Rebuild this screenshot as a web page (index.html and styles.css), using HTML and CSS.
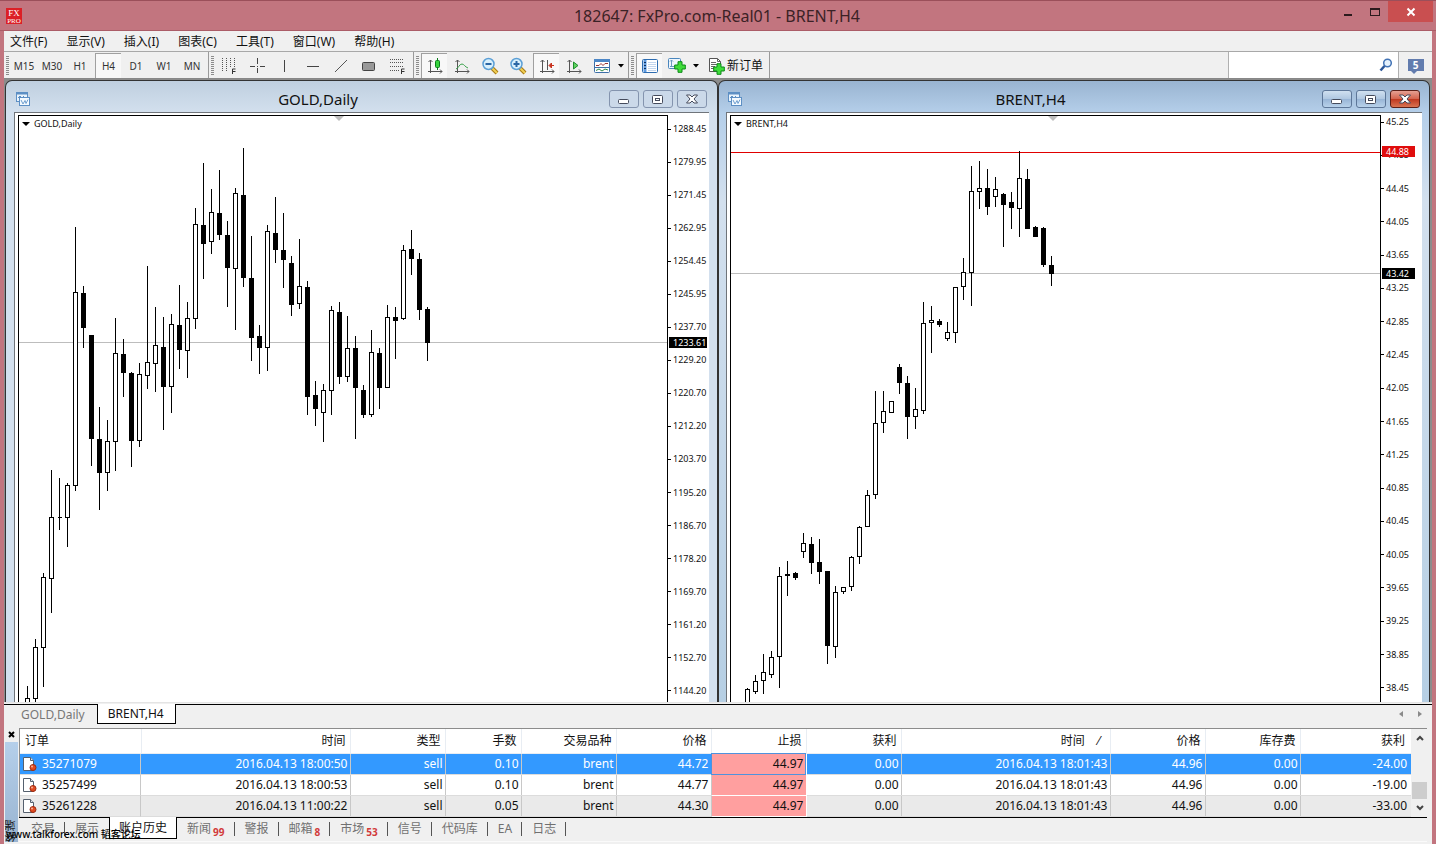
FILE: index.html
```html
<!DOCTYPE html>
<html lang="zh-CN">
<head>
<meta charset="utf-8">
<title>182647: FxPro.com-Real01 - BRENT,H4</title>
<link rel="stylesheet" href="styles.css">
</head>
<body>
<svg class="defs" width="0" height="0" aria-hidden="true">
  <defs>
    <symbol id="chart-window" viewBox="0 0 16 16">
      <rect x="1.500" y="1.500" width="11" height="9" fill="#eaf4fc" stroke="#5d8fc4"/>
      <path d="M1 2.500h12" stroke="#5d8fc4" stroke-width="2"/>
      <path d="M3 7l2-2 2 2 2-2" fill="none" stroke="#5d8fc4"/>
      <rect x="4.500" y="6.500" width="10" height="8" fill="#f4faff" stroke="#5d8fc4"/>
      <path d="M6 9l2 4 2-3.500 1 3 2-4" fill="none" stroke="#6f9fd0"/>
    </symbol>
    <symbol id="win-min" viewBox="0 0 16 12"><rect x="2.500" y="6.500" width="10" height="4" rx="1" fill="#fff" stroke="#454b5c"/></symbol>
    <symbol id="win-max" viewBox="0 0 16 12"><rect x="2.500" y="2.500" width="10" height="8" rx="1" fill="#fff" stroke="#454b5c"/><rect x="5.500" y="5.500" width="4" height="2" fill="#fff" stroke="#454b5c"/></symbol>
    <symbol id="win-close" viewBox="0 0 16 12"><path d="M2.500 2h3.500L8 4l2-2h3.500l-3.500 4 3.500 4H10L8 8l-2 2H2.500L6 6z" fill="#fff" stroke="#454b5c"/></symbol>
    <symbol id="green-plus" viewBox="0 0 12 12"><path d="M4 .7h4V4h3.300v4H8v3.300H4V8H.7V4H4z" fill="#3fdc3a" stroke="#0b8a17"/></symbol>
    <symbol id="order" viewBox="0 0 16 16">
      <path d="M1.500 1.500h7l3 3v10h-10z" fill="#fff" stroke="#55606e"/><path d="M8.500 1.500v3h3" fill="#dfe5ec" stroke="#55606e"/>
      <circle cx="11" cy="11.500" r="3" fill="#e04a20" stroke="#9c2b10"/><circle cx="10" cy="10.500" r="1" fill="#f7b49b"/>
    </symbol>
  </defs>
</svg>

<div class="app">
  <header class="titlebar">
    <svg class="brand" width="16" height="16" viewBox="0 0 16 16" aria-label="FxPro"><rect width="16" height="16" fill="#dc1f26"/><text x="8" y="8" class="brand-a">FX</text><text x="8" y="15" class="brand-b">PRO</text></svg>
    <h1 class="app-title">182647: FxPro.com-Real01 - BRENT,H4</h1>
    <div class="caption-buttons">
      <button class="caption" aria-label="最小化"><svg width="12" height="12"><path d="M2 9h8" stroke="#2c1a1d" stroke-width="2"/></svg></button>
      <button class="caption" aria-label="最大化"><svg width="12" height="12"><path d="M1 3.500h10M1.500 3v7M10.500 3v7M1 9.500h10" fill="none" stroke="#2c1a1d"/><path d="M1 3h10" stroke="#2c1a1d" stroke-width="2"/></svg></button>
      <button class="caption caption-close" aria-label="关闭"><svg width="10" height="10"><path d="M1.500 1.500l7 7M8.500 1.500l-7 7" stroke="#fff" stroke-width="2"/></svg></button>
    </div>
  </header>

  <nav class="menu">
    <button>文件(F)</button><button>显示(V)</button><button>插入(I)</button><button>图表(C)</button><button>工具(T)</button><button>窗口(W)</button><button>帮助(H)</button>
  </nav>

  <div class="toolbar">
    <div class="group">
      <button class="tool">M15</button><button class="tool">M30</button><button class="tool">H1</button><button class="tool pressed">H4</button><button class="tool">D1</button><button class="tool">W1</button><button class="tool">MN</button>
    </div>
    <div class="group">
      <button class="tool" aria-label="斐波那契时区"><svg width="16" height="18"><path d="M1.500 1v13M5.500 1v13M9.500 1v10M13.500 1v9" stroke="#555" stroke-dasharray="1 1"/><path d="M11.500 17v-5h3M11.500 14.500h3" fill="none" stroke="#333"/></svg></button>
      <button class="tool" aria-label="十字线"><svg width="16" height="16"><path d="M8.500 0v6M8.500 10v5M1 8.500h5M11 8.500h5M8 8.500h1" stroke="#444"/></svg></button>
      <button class="tool" aria-label="垂直线"><svg width="16" height="16"><path d="M7.500 2v12" stroke="#444"/></svg></button>
      <button class="tool" aria-label="水平线"><svg width="16" height="16"><path d="M2 8.500h12" stroke="#444"/></svg></button>
      <button class="tool" aria-label="趋势线"><svg width="16" height="16"><path d="M2 14L14 2" stroke="#555"/></svg></button>
      <button class="tool" aria-label="矩形"><svg width="16" height="16"><rect x="1.500" y="4.500" width="12" height="8" rx="1" fill="#999" stroke="#444"/></svg></button>
      <button class="tool" aria-label="斐波那契回调"><svg width="16" height="18"><path d="M1 2.500h14M1 5.500h14M1 9.500h14M1 13.500h10" stroke="#555" stroke-dasharray="1 1"/><path d="M12.500 17v-5h3M12.500 14.500h3" fill="none" stroke="#333"/></svg></button>
    </div>
    <div class="group">
      <button class="tool pressed" aria-label="蜡烛图"><svg width="16" height="16"><path d="M3.500 2v13M1 13.500h14M1.500 4l2-2 2 2M13 11.500l2 2-2 2" fill="none" stroke="#555"/><path d="M10.500 0v12" stroke="#0b7d1a"/><rect x="8.500" y="2.500" width="4" height="7" rx="1" fill="#35d43c" stroke="#0b7d1a"/></svg></button>
      <button class="tool" aria-label="折线图"><svg width="16" height="16"><path d="M3.500 2v13M1 13.500h14M1.500 4l2-2 2 2M13 11.500l2 2-2 2" fill="none" stroke="#555"/><path d="M2 11c3-1 3-5 6-5 2 0 3 3 6 4" fill="none" stroke="#3aa24c"/></svg></button>
      <button class="tool" aria-label="缩小"><svg width="18" height="18"><path d="M11 11l5 5" stroke="#a87a14" stroke-width="4"/><path d="M11 11l5 5" stroke="#f0cf55" stroke-width="2"/><circle cx="7.500" cy="7" r="5.500" fill="#d9f0fc" stroke="#5b9fd6" stroke-width="1.500"/><path d="M4.500 7h6" stroke="#2a66a5" stroke-width="2"/></svg></button>
      <button class="tool" aria-label="放大"><svg width="18" height="18"><path d="M11 11l5 5" stroke="#a87a14" stroke-width="4"/><path d="M11 11l5 5" stroke="#f0cf55" stroke-width="2"/><circle cx="7.500" cy="7" r="5.500" fill="#d9f0fc" stroke="#5b9fd6" stroke-width="1.500"/><path d="M4.500 7h6M7.500 4v6" stroke="#2a66a5" stroke-width="2"/></svg></button>
      <button class="tool pressed" aria-label="图表平移"><svg width="16" height="16"><path d="M3.500 2v13M1 13.500h14M1.500 4l2-2 2 2M13 11.500l2 2-2 2M8.500 2v10" fill="none" stroke="#555"/><path d="M15 7.500h-4M12.500 5l-2.500 2.500 2.500 2.500z" fill="#c8321e" stroke="#c8321e"/></svg></button>
      <button class="tool" aria-label="自动滚动"><svg width="16" height="16"><path d="M3.500 2v13M1 13.500h14M1.500 4l2-2 2 2M13 11.500l2 2-2 2" fill="none" stroke="#555"/><path d="M7.500 4l4.500 3.500-4.500 3.500z" fill="#5fd15f" stroke="#1c8f2c"/></svg></button>
      <button class="tool" aria-label="模板"><svg width="18" height="16"><rect x="1.500" y="1.500" width="15" height="13" rx="1" fill="#fff" stroke="#3d6fa8"/><path d="M1 2.500h16" stroke="#4c86c6" stroke-width="3"/><path d="M1 9.500h16" stroke="#3d6fa8"/><path d="M3 7.500h3l2-2 2 2 2-2h3" fill="none" stroke="#993636"/><path d="M3 12.500l3-1.500 3 2 3-2 3 1" fill="none" stroke="#2d8a4a"/></svg></button>
      <button class="drop" aria-label="模板列表"><svg width="6" height="4"><path d="M0 0h6L3 3.500z"/></svg></button>
    </div>
    <div class="group">
      <button class="tool pressed" aria-label="终端"><svg width="16" height="16"><rect x=".5" y="1.500" width="15" height="13" rx="1" fill="#fff" stroke="#2d6cb0"/><path d="M3 2v12" stroke="#5f9be0" stroke-width="3"/><path d="M6 4.500h8M6 6.500h8M6 8.500h8M6 10.500h8M6 12.500h8" stroke="#c3d6ee"/><path d="M2 4.500h2M2 7.500h2M2 10.500h2" stroke="#0c2f5f"/></svg></button>
      <button class="tool" aria-label="新图表"><svg width="18" height="17"><rect x=".5" y="1.500" width="12" height="10" rx="1" fill="#eef6fd" stroke="#4a86bd"/><path d="M3.500 3v7M2 4.500l1.500-1.500 1.500 1.500M2 9.500h8" fill="none" stroke="#6a98bf"/><use href="#green-plus" x="6" y="4" width="12" height="12"/></svg></button>
      <button class="drop" aria-label="新图表列表"><svg width="6" height="4"><path d="M0 0h6L3 3.500z"/></svg></button>
      <button class="new-order"><svg width="18" height="18"><path d="M1.500 1.500h8l3 3v10h-11z" fill="#fff" stroke="#555"/><path d="M9.500 1.500v3h3M3 5.500h5M3 7.500h7M3 9.500h4M3 11.500h3" fill="none" stroke="#666"/><use href="#green-plus" x="5" y="6" width="12" height="12"/></svg>新订单</button>
    </div>
    <label class="search"><input type="search" aria-label="搜索"><svg width="14" height="14"><circle cx="8.500" cy="5" r="3.800" fill="#e6f2fd" stroke="#4273b5" stroke-width="1.500"/><path d="M5.500 8L1.500 12.500" stroke="#2b5699" stroke-width="2.500"/></svg></label>
    <button class="chat" aria-label="消息"><span class="bubble">5</span></button>
  </div>

  <main class="mdi">
    <section class="window">
      <header class="window-head">
        <svg width="16" height="16"><use href="#chart-window"/></svg>
        <h2>GOLD,Daily</h2>
        <div class="window-buttons"><button aria-label="最小化"><svg width="16" height="12"><use href="#win-min"/></svg></button><button aria-label="还原"><svg width="16" height="12"><use href="#win-max"/></svg></button><button aria-label="关闭"><svg width="16" height="12"><use href="#win-close"/></svg></button></div>
      </header>
      <div class="chart">
        <div class="plot">
          <svg class="candles" id="gold"><line class="line-bid" x1="0" y1="226.500" x2="100%" y2="226.500"/></svg>
          <span class="symbol"><svg width="8" height="4"><path d="M0 0h8L4 4z"/></svg>GOLD,Daily</span>
          <svg class="shift" width="10" height="5"><path d="M0 0h10L5 5z" fill="#bdbdbd"/></svg>
        </div>
        <ol class="scale scale-gold">
          <li>1288.45</li><li>1279.95</li><li>1271.45</li><li>1262.95</li><li>1254.45</li><li>1245.95</li><li>1237.70</li><li>1229.20</li><li>1220.70</li><li>1212.20</li><li>1203.70</li><li>1195.20</li><li>1186.70</li><li>1178.20</li><li>1169.70</li><li>1161.20</li><li>1152.70</li><li>1144.20</li>
          <li class="tag tag-gold">1233.61</li>
        </ol>
      </div>
    </section>
    <section class="window active">
      <header class="window-head">
        <svg width="16" height="16"><use href="#chart-window"/></svg>
        <h2>BRENT,H4</h2>
        <div class="window-buttons"><button aria-label="最小化"><svg width="16" height="12"><use href="#win-min"/></svg></button><button aria-label="还原"><svg width="16" height="12"><use href="#win-max"/></svg></button><button class="close" aria-label="关闭"><svg width="16" height="12"><use href="#win-close"/></svg></button></div>
      </header>
      <div class="chart">
        <div class="plot">
          <svg class="candles" id="brent"><line class="line-bid" x1="0" y1="157.500" x2="100%" y2="157.500"/><line class="line-ask" x1="0" y1="36.500" x2="100%" y2="36.500"/></svg>
          <span class="symbol"><svg width="8" height="4"><path d="M0 0h8L4 4z"/></svg>BRENT,H4</span>
          <svg class="shift" width="10" height="5"><path d="M0 0h10L5 5z" fill="#bdbdbd"/></svg>
        </div>
        <ol class="scale scale-brent">
          <li>45.25</li><li>44.85</li><li>44.45</li><li>44.05</li><li>43.65</li><li>43.25</li><li>42.85</li><li>42.45</li><li>42.05</li><li>41.65</li><li>41.25</li><li>40.85</li><li>40.45</li><li>40.05</li><li>39.65</li><li>39.25</li><li>38.85</li><li>38.45</li>
          <li class="tag tag-ask">44.88</li><li class="tag tag-bid">43.42</li>
        </ol>
      </div>
    </section>
  </main>

  <div class="chart-tabs">
    <button>GOLD,Daily</button><button class="current">BRENT,H4</button>
    <div class="pager"><svg width="4" height="6"><path d="M4 0v6L0 3z" fill="#8a8a8a"/></svg><svg width="4" height="6"><path d="M0 0v6l4-3z" fill="#8a8a8a"/></svg></div>
  </div>

  <section class="terminal">
    <aside class="side"><button class="side-close" aria-label="关闭"><svg width="7" height="7"><path d="M1 1l5 5M6 1L1 6" stroke="#000" stroke-width="2"/></svg></button><div class="side-bar"><span>终端</span></div></aside>
    <div class="terminal-main">
      <div class="history">
        <table>
          <colgroup><col class="c-order"><col class="c-time"><col class="c-std"><col class="c-lots"><col class="c-std"><col class="c-std"><col class="c-std"><col class="c-std"><col class="c-time"><col class="c-std"><col class="c-std"><col class="c-profit"></colgroup>
          <thead><tr><th>订单</th><th>时间</th><th>类型</th><th>手数</th><th>交易品种</th><th>价格</th><th>止损</th><th>获利</th><th>时间 <span class="sort">⁄</span></th><th>价格</th><th>库存费</th><th>获利</th></tr></thead>
          <tbody>
            <tr class="selected"><td><svg width="16" height="16"><use href="#order"/></svg>35271079</td><td>2016.04.13 18:00:50</td><td>sell</td><td>0.10</td><td>brent</td><td>44.72</td><td class="stop">44.97</td><td>0.00</td><td>2016.04.13 18:01:43</td><td>44.96</td><td>0.00</td><td>-24.00</td></tr>
            <tr><td><svg width="16" height="16"><use href="#order"/></svg>35257499</td><td>2016.04.13 18:00:53</td><td>sell</td><td>0.10</td><td>brent</td><td>44.77</td><td class="stop">44.97</td><td>0.00</td><td>2016.04.13 18:01:43</td><td>44.96</td><td>0.00</td><td>-19.00</td></tr>
            <tr class="alt"><td><svg width="16" height="16"><use href="#order"/></svg>35261228</td><td>2016.04.13 11:00:22</td><td>sell</td><td>0.05</td><td>brent</td><td>44.30</td><td class="stop">44.97</td><td>0.00</td><td>2016.04.13 18:01:43</td><td>44.96</td><td>0.00</td><td>-33.00</td></tr>
          </tbody>
        </table>
        <div class="scrollbar"><button aria-label="向上"><svg width="8" height="6"><path d="M1 5l3-3 3 3" fill="none" stroke="#444" stroke-width="2"/></svg></button><i class="thumb"></i><button aria-label="向下"><svg width="8" height="6"><path d="M1 1l3 3 3-3" fill="none" stroke="#444" stroke-width="2"/></svg></button></div>
      </div>
      <div class="term-tabs">
        <button>交易</button><button class="before">展示</button><button class="current">账户历史</button><button>新闻<sub>99</sub></button><button>警报</button><button>邮箱<sub>8</sub></button><button>市场<sub>53</sub></button><button>信号</button><button>代码库</button><button>EA</button><button>日志</button>
      </div>
    </div>
  </section>
  <p class="watermark">www.talkforex.com 韬客论坛</p>
</div>
<script src="charts.js"></script>
</body>
</html>
```
FILE: styles.css
```css
* { box-sizing: border-box; }
body { margin: 0; font: 12px/16px "Noto Sans", "Noto Sans CJK SC", sans-serif; color: #111; background: #f0f0f0; }
button { border: 0; padding: 0; margin: 0; background: none; font: inherit; color: inherit; }
h1, h2, p, ol { margin: 0; padding: 0; font-weight: normal; list-style: none; }
svg { display: block; flex: none; }
.defs { position: absolute; }

.app { position: relative; display: flex; flex-direction: column; min-height: 100vh; border: solid #c2757f; border-width: 0 4px; }

.titlebar { display: grid; grid-template-columns: 1fr auto 1fr; align-items: center; height: 31px; margin: 0 -4px; padding-left: 6px; background: #c2757f; border-top: 1px solid #9b4f5a; border-bottom: 1px solid #ab5c67; }
.brand text { fill: #fff; text-anchor: middle; font-family: "Liberation Serif", serif; }
.brand .brand-a { font-size: 9px; }
.brand .brand-b { font-size: 7px; }
.app-title { padding-right: 8px; font-size: 16px; line-height: 20px; color: #3b2226; }
.caption-buttons { display: flex; justify-content: flex-end; align-self: start; margin-right: 3px; }
.caption { display: grid; place-items: center; width: 27px; height: 21px; }
.caption-close { width: 45px; background: #c94f50; }

.menu { display: flex; gap: 19px; height: 21px; padding: 0 6px; background: #f0f0f0; border-bottom: 1px solid #a8a8a8; }
.menu button { line-height: 19px; white-space: nowrap; }

.toolbar { display: flex; height: 27px; background: #f0f0f0; border-bottom: 1px solid #888; }
.group { display: flex; align-items: center; padding: 1px 2px 0 6px; border-right: 1px solid #9a9a9a; position: relative; }
.group::before { content: ""; position: absolute; left: 2px; top: 4px; bottom: 3px; width: 3px; background: repeating-linear-gradient(#8c8c8c 0 1px, #f0f0f0 1px 2px); }
.tool { display: grid; place-items: center; width: 28px; height: 25px; font-size: 10px; color: #333; }
.pressed { width: 26px; margin: 0 1px; background: #f8f8f8; border: solid #a0a0a0; border-width: 1px 0 0 1px; }
.drop { display: grid; place-items: center; width: 10px; height: 25px; }
.new-order { display: flex; align-items: center; gap: 1px; padding: 0 4px 0 7px; white-space: nowrap; }
.search { display: flex; align-items: center; width: 171px; margin-left: auto; padding-right: 5px; background: #fff; border: solid #b0b0b0; border-width: 0 1px; }
.search input { flex: 1; min-width: 0; border: 0; outline: 0; background: none; }
.chat { display: grid; place-items: center; width: 33px; }
.bubble { position: relative; width: 16px; height: 12px; background: #627cae; color: #fff; font-size: 10px; line-height: 12px; font-weight: bold; }
.bubble::after { content: ""; position: absolute; left: 3px; top: 12px; border: solid transparent; border-width: 0 3px; border-top: 3px solid #627cae; }

.mdi { flex: 1; display: grid; grid-template-columns: 713fr 712fr; padding: 1px 2px 0 1px; background: #8c8c8c; border-bottom: 1px solid #e4e4e4; }
.window { display: flex; flex-direction: column; min-width: 0; padding: 0 8px; border: solid #333; border-width: 1px 1px 0; border-radius: 7px 7px 0 0; background: linear-gradient(#bfcfdf, #d3e0ee 32px, #d3e0ee); }
.window.active { padding: 0 7px; background: linear-gradient(#99b4d1, #b5cfea 32px, #d3e0ee 120px, #b6cfe4); }
.window-head { display: flex; align-items: center; height: 31px; padding: 4px 2px 0 1px; }
.window-head h2 { flex: 1; text-align: center; font-size: 15px; line-height: 18px; }
.window-buttons { display: flex; gap: 4px; padding-left: 4px; }
.window-buttons button { display: grid; place-items: center; width: 30px; height: 18px; border: 1px solid #8494ae; border-radius: 3px; background: #cbd9e9; }
.active .window-buttons button { border-color: #5d7698; background: linear-gradient(#d0e0f0, #afc7e1 50%, #98b5d6 51%, #b8d1ea); }
.active .window-buttons .close { border-color: #5c2018; background: linear-gradient(#e5a093, #d4624c 50%, #bf3820 51%, #d97352); }

.chart { flex: 1; display: flex; padding: 2px 0 0 3px; background: #fff; border: solid #6f747a; border-width: 1px 0 0 1px; }
.plot { position: relative; flex: 1; min-width: 0; overflow: hidden; border: solid #000; border-width: 1px 1px 0; }
.candles { position: absolute; inset: 0; width: 100%; height: 100%; shape-rendering: crispEdges; }
.candles path { stroke: #000; }
.candles .open { fill: #fff; }
.candles .closed { fill: #000; }
.line-bid { stroke: #bdbdbd; }
.line-ask { stroke: #e00000; }
.symbol { position: absolute; left: 3px; top: 2px; display: flex; align-items: center; gap: 4px; font-size: 9px; line-height: 12px; }
.shift { position: absolute; left: 315px; top: 0; }
.active .shift { left: 317px; }

.scale { position: relative; display: flex; flex-direction: column; justify-content: space-between; width: 41px; font-size: 9px; line-height: 12px; }
.scale li { display: flex; align-items: center; gap: 2px; }
.scale li::before { content: ""; width: 3px; height: 1px; background: #000; }
.scale-gold { padding: 8px 0 5px; }
.scale-brent { padding: 1px 0 8px; }
.scale .tag { position: absolute; left: 1px; right: 2px; height: 11px; padding-left: 4px; background: #000; color: #fff; }
.scale-brent .tag { right: 7px; }
.scale .tag::before { content: none; }
.tag-gold { top: 222px; }
.tag-bid { top: 153px; }
.scale .tag-ask { top: 31px; background: #e00d0d; }

.chart-tabs { display: flex; align-items: flex-start; height: 24px; margin-top: 1px; border-top: 1px solid #000; background: #f0f0f0; }
.chart-tabs button { height: 19px; padding: 0 12px 0 17px; line-height: 20px; color: #777; }
.chart-tabs .current { margin-top: -1px; padding: 0 11px 0 10px; height: 20px; color: #111; background: #fff; border: solid #000; border-width: 0 1px 1px; }
.pager { display: flex; gap: 15px; margin-left: auto; padding: 6px 10px 0 0; }

.terminal { display: flex; padding-bottom: 2px; }
.side { display: flex; flex-direction: column; width: 15px; }
.side-close { display: grid; place-items: center; height: 12px; }
.side-bar { flex: 1; display: flex; align-items: flex-end; margin: 2px 1px 0; background: linear-gradient(#b5cfea, #99b4d1); }
.side-bar span { writing-mode: vertical-rl; transform: rotate(180deg); font-size: 11px; line-height: 12px; }
.terminal-main { flex: 1; min-width: 0; }
.history { display: flex; margin-right: 5px; background: #fff; border: solid #8c8c8c; border-width: 1px 0 0 1px; }
table { flex: 1; width: 100%; table-layout: fixed; border-collapse: collapse; }
.c-order { width: 121px; }
.c-time { width: 209px; }
.c-std { width: 95px; }
.c-lots { width: 76px; }
.c-profit { width: 111px; }
th, td { height: 21px; padding: 0 2px; text-align: right; line-height: 20px; white-space: nowrap; border-right: 1px solid #c8c8c8; border-bottom: 1px solid #dcdcdc; }
th { height: 24px; padding: 0 4px; font-weight: normal; border-color: #e8edf3; }
th:first-child { text-align: left; padding-left: 5px; }
th:last-child, td:last-child { padding-right: 4px; border-right: 0; }
th:last-child { padding-right: 6px; }
td:first-child { display: flex; align-items: center; gap: 4px; padding-left: 2px; }
.sort { padding: 0 6px 0 10px; }
.selected td { background: #3399ff; color: #fff; }
.alt td { background: #eaeaea; }
.history .stop { background: #ff9f9f; color: #111; border-color: #fff; }
.selected .stop { outline: 1px solid #4f92dd; outline-offset: -1px; }
.scrollbar { display: flex; flex-direction: column; width: 17px; background: #f0f0f0; }
.scrollbar button { display: grid; place-items: center; height: 18px; }
.thumb { width: 15px; height: 17px; margin: auto 1px 0; background: #cdcdcd; }

.term-tabs { display: flex; height: 25px; margin-right: 5px; border-top: 1px solid #000; background: #f0f0f0; border-bottom: 1px solid #fafafa; }
.term-tabs button { position: relative; height: 21px; padding: 0 10px; line-height: 20px; color: #707070; white-space: nowrap; }
.term-tabs button:first-child { padding-left: 12px; }
.term-tabs button::after { content: ""; position: absolute; right: 0; top: 4px; width: 1px; height: 14px; background: #555; }
.term-tabs .current { margin-top: -1px; height: 22px; padding: 0 9px; color: #111; background: #fff; border: solid #000; border-width: 0 1px 1px; }
.term-tabs .current::after, .term-tabs .before::after { content: none; }
.term-tabs sub { padding-left: 2px; color: #d23b3b; font-size: 10px; line-height: 10px; font-weight: bold; }
.watermark { position: absolute; left: 2px; bottom: 3px; font-size: 10px; line-height: 14px; font-weight: 500; color: #000; }
```
FILE: charts.js
```js
// Candles in pixels: [high, body top, body bottom, low, falling]
const STEP = 8;
const charts = {
  gold: { x: 8, top: 116, bars: [
    [686,698,708,708,0],[639,647,698,708,0],[573,577,647,686,0],[470,517,578,612,0],[478,517,517,529,0],[483,485,517,546,0],
    [227,292,485,490,0],[286,293,327,347,1],[335,335,438,465,1],[407,439,472,509,1],[420,441,472,490,0],[318,353,441,470,0],
    [339,354,372,396,1],[372,373,440,466,1],[363,374,440,446,0],[266,362,375,388,0],[307,345,363,391,0],[317,347,386,429,1],
    [314,324,386,412,0],[285,325,349,368,1],[302,318,350,377,0],[208,224,318,328,0],[163,225,243,278,1],[189,212,241,253,0],
    [170,213,234,239,1],[221,235,267,306,1],[188,193,268,329,0],[148,195,277,286,1],[236,278,337,360,1],[325,336,347,373,1],
    [225,231,347,370,0],[197,233,249,262,1],[213,250,259,287,1],[256,263,304,315,1],[239,286,303,308,0],[281,287,396,414,1],
    [381,395,408,425,1],[384,390,412,441,0],[306,310,390,414,0],[302,312,376,383,1],[316,348,376,381,0],[336,348,387,438,1],
    [385,390,414,417,1],[330,352,414,416,0],[348,353,387,408,1],[305,317,387,387,0],[307,317,320,358,1],[245,250,318,319,0],
    [230,249,258,274,1],[253,259,309,319,1],[307,309,342,360,1]
  ] },
  brent: { x: 16, top: 116, bars: [
    [688,689,708,708,0],[675,681,691,693,0],[654,672,680,693,0],[651,657,674,677,0],[567,576,656,687,0],[561,574,575,595,1],
    [572,573,577,579,1],[533,543,551,557,0],[537,544,562,573,1],[539,562,571,583,1],[571,571,645,663,1],[586,592,646,657,0],
    [587,587,591,593,0],[556,557,586,590,0],[526,527,556,563,0],[490,495,526,526,0],[391,423,494,498,0],[391,411,422,432,0],
    [401,401,412,412,0],[364,367,382,393,1],[376,383,416,438,1],[388,409,416,428,0],[302,323,410,413,0],[306,320,322,352,0],
    [319,321,324,326,1],[322,332,338,340,0],[287,287,332,342,0],[258,272,286,299,0],[166,191,272,305,0],[161,188,191,208,0],
    [169,188,206,214,1],[177,189,196,206,0],[193,194,204,246,1],[192,202,207,228,1],[151,178,208,236,0],[169,179,228,228,1],
    [226,227,236,236,1],[227,228,264,266,1],[256,265,273,285,1]
  ] }
};
for (const [id, chart] of Object.entries(charts)) {
  const svg = document.getElementById(id);
  chart.bars.forEach(([high, top, bottom, low, falling], i) => {
    const x = chart.x + i * STEP + 0.5;
    const y = v => v - chart.top + 0.5;
    const path = document.createElementNS('http://www.w3.org/2000/svg', 'path');
    path.setAttribute('class', falling ? 'closed' : 'open');
    path.setAttribute('d', `M${x} ${y(high) - 0.5}V${y(top)}M${x} ${y(bottom)}V${y(low) + 0.5}M${x - 2} ${y(top)}h4V${y(bottom)}h-4z`);
    svg.append(path);
  });
}
```
